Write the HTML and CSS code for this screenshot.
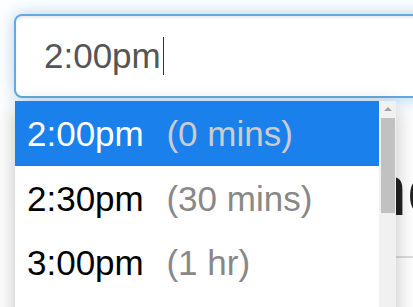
FILE: index.html
```html
<!DOCTYPE html>
<html>
<head>
<meta charset="utf-8">
<link rel="stylesheet" href="styles.css">
</head>
<body>
<div class="page">
  <div class="field">
    <div class="input"><span class="value">2:00pm</span><span class="caret"></span></div>
    <div class="dropdown">
      <ul class="list">
        <li class="opt selected">2:00pm <span class="dur">(0 mins)</span></li>
        <li class="opt">2:30pm <span class="dur">(30 mins)</span></li>
        <li class="opt">3:00pm <span class="dur">(1 hr)</span></li>
        <li class="opt">3:30pm <span class="dur">(1.5 hrs)</span></li>
      </ul>
      <div class="scrollbar"><span class="arrow"></span><span class="thumb"></span></div>
    </div>
  </div>
  <h1 class="title">no</h1>
  <hr class="rule">
</div>
</body>
</html>
```
FILE: styles.css
```css
html, body {
  margin: 0;
  padding: 0;
  background: #fff;
  overflow: hidden;
  width: 413px;
  height: 307px;
}
body {
  font-family: "Liberation Sans", Arial, sans-serif;
}
.page {
  width: 413px;
  height: 307px;
  overflow: hidden;
}
.field {
  position: relative;
  padding: 14px 0 0 14px;
}
.input {
  width: 440px;
  height: 84px;
  box-sizing: border-box;
  border: 2px solid #66a8e3;
  border-radius: 8px;
  box-shadow: inset 0 2px 2px rgba(0,0,0,0.075), 0 0 18px rgba(102,175,233,0.55);
  display: flex;
  align-items: center;
  padding-left: 28px;
  font-size: 35px;
  color: #555;
  background: #fff;
}
.caret {
  width: 1px;
  height: 38px;
  background: #333;
  margin-left: 2px;
}
.dropdown {
  position: absolute;
  top: 101px;
  left: 15px;
  width: 381px;
  height: 230px;
  display: flex;
  background: #fff;
  box-shadow: 0 6px 20px rgba(0,0,0,0.25);
  z-index: 2;
}
.list {
  flex: 1;
  margin: 0;
  padding: 0;
  list-style: none;
}
.opt {
  height: 64.5px;
  box-sizing: border-box;
  padding: 2px 0 0 12px;
  line-height: 62.5px;
  font-size: 35px;
  color: #000;
  white-space: nowrap;
}
.dur {
  margin-left: 13px;
  color: #888;
}
.selected {
  background: #1980ec;
  color: #fff;
}
.selected .dur {
  color: #ccc;
}
.scrollbar {
  width: 17px;
  background: #f1f1f1;
  display: flex;
  flex-direction: column;
  align-items: center;
}
.arrow {
  margin-top: 6px;
  width: 0;
  height: 0;
  border-left: 4px solid transparent;
  border-right: 4px solid transparent;
  border-bottom: 4px solid #a3a3a3;
}
.thumb {
  margin-top: 7px;
  width: 14px;
  height: 95px;
  background: #c1c1c1;
}
.title {
  margin: 56px 0 0;
  padding-left: 367px;
  font-size: 72px;
  line-height: 72px;
  font-weight: normal;
  color: #222;
  white-space: nowrap;
}
.rule {
  margin: 30px 0 0 390px;
  border: 0;
  border-top: 2px solid #ddd;
  height: 0;
}
```
